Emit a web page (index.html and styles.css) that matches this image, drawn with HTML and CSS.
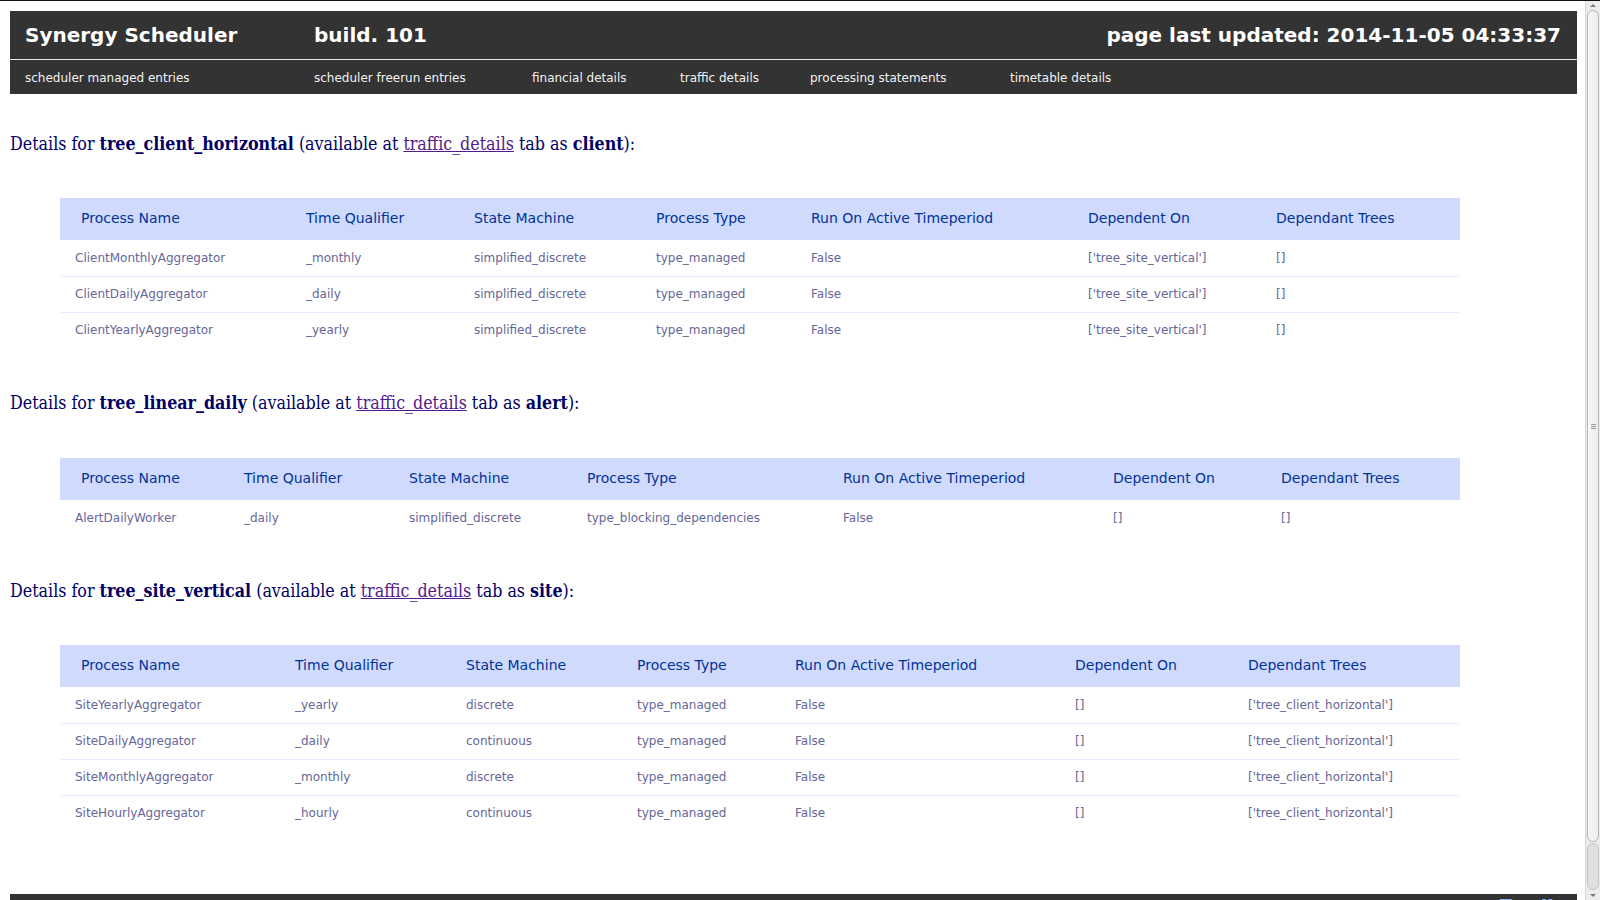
FILE: index.html
```html
<!DOCTYPE html>
<html>
<head>
<meta charset="utf-8">
<title>Synergy Scheduler</title>
<link rel="stylesheet" href="styles.css">
</head>
<body>
<div class="viewport">
  <div class="page">
    <div class="header">
      <div class="title-row">
        <div class="title">Synergy Scheduler</div>
        <div class="build">build. 101</div>
        <div class="updated">page last updated: 2014-11-05 04:33:37</div>
      </div>
      <div class="nav">
        <a class="nav-item">scheduler managed entries</a>
        <a class="nav-item">scheduler freerun entries</a>
        <a class="nav-item">financial details</a>
        <a class="nav-item">traffic details</a>
        <a class="nav-item">processing statements</a>
        <a class="nav-item">timetable details</a>
      </div>
    </div>

    <div class="section">
      <p class="heading">Details for <b>tree_client_horizontal</b> (available at <a class="link" href="#">traffic_details</a> tab as <b>client</b>):</p>
      <table class="details">
        <colgroup><col class="c231"><col class="c168"><col class="c181"><col class="c155"><col class="c277"><col class="c187"><col class="c199"></colgroup>
        <thead><tr><th>Process Name</th><th>Time Qualifier</th><th>State Machine</th><th>Process Type</th><th>Run On Active Timeperiod</th><th>Dependent On</th><th>Dependant Trees</th></tr></thead>
        <tbody>
          <tr><td>ClientMonthlyAggregator</td><td>_monthly</td><td>simplified_discrete</td><td>type_managed</td><td>False</td><td>['tree_site_vertical']</td><td>[]</td></tr>
          <tr><td>ClientDailyAggregator</td><td>_daily</td><td>simplified_discrete</td><td>type_managed</td><td>False</td><td>['tree_site_vertical']</td><td>[]</td></tr>
          <tr><td>ClientYearlyAggregator</td><td>_yearly</td><td>simplified_discrete</td><td>type_managed</td><td>False</td><td>['tree_site_vertical']</td><td>[]</td></tr>
        </tbody>
      </table>
    </div>

    <div class="section">
      <p class="heading">Details for <b>tree_linear_daily</b> (available at <a class="link" href="#">traffic_details</a> tab as <b>alert</b>):</p>
      <table class="details">
        <colgroup><col class="c169"><col class="c165"><col class="c178"><col class="c256"><col class="c270"><col class="c167"><col class="c194"></colgroup>
        <thead><tr><th>Process Name</th><th>Time Qualifier</th><th>State Machine</th><th>Process Type</th><th>Run On Active Timeperiod</th><th>Dependent On</th><th>Dependant Trees</th></tr></thead>
        <tbody>
          <tr><td>AlertDailyWorker</td><td>_daily</td><td>simplified_discrete</td><td>type_blocking_dependencies</td><td>False</td><td>[]</td><td>[]</td></tr>
        </tbody>
      </table>
    </div>

    <div class="section">
      <p class="heading">Details for <b>tree_site_vertical</b> (available at <a class="link" href="#">traffic_details</a> tab as <b>site</b>):</p>
      <table class="details">
        <colgroup><col class="c220"><col class="c171"><col class="c171"><col class="c158"><col class="c280"><col class="c172"><col class="c227"></colgroup>
        <thead><tr><th>Process Name</th><th>Time Qualifier</th><th>State Machine</th><th>Process Type</th><th>Run On Active Timeperiod</th><th>Dependent On</th><th>Dependant Trees</th></tr></thead>
        <tbody>
          <tr><td>SiteYearlyAggregator</td><td>_yearly</td><td>discrete</td><td>type_managed</td><td>False</td><td>[]</td><td>['tree_client_horizontal']</td></tr>
          <tr><td>SiteDailyAggregator</td><td>_daily</td><td>continuous</td><td>type_managed</td><td>False</td><td>[]</td><td>['tree_client_horizontal']</td></tr>
          <tr><td>SiteMonthlyAggregator</td><td>_monthly</td><td>discrete</td><td>type_managed</td><td>False</td><td>[]</td><td>['tree_client_horizontal']</td></tr>
          <tr><td>SiteHourlyAggregator</td><td>_hourly</td><td>continuous</td><td>type_managed</td><td>False</td><td>[]</td><td>['tree_client_horizontal']</td></tr>
        </tbody>
      </table>
    </div>

    <div class="footer"><span class="feedback">Feedback</span></div>
  </div>
  <div class="scrollbar">
    <div class="sb-arrow sb-up"></div>
    <div class="sb-thumb"><span class="sb-grip"></span></div>
    <div class="sb-track"></div>
    <div class="sb-arrow sb-down"></div>
  </div>
</div>
</body>
</html>
```

FILE: styles.css
```css
html, body {
  margin: 0;
  padding: 0;
  height: 900px;
  overflow: hidden;
  background: #fff;
}
body {
  border-top: 1px solid #111;
  box-sizing: border-box;
}
.viewport {
  display: flex;
  height: 899px;
}
.page {
  width: 1585px;
  box-sizing: border-box;
  padding: 10px 8px 0 10px;
  flex: none;
}
.header {
  background: #333333;
  font-family: "DejaVu Sans", sans-serif;
  color: #fff;
}
.title-row {
  display: grid;
  grid-template-columns: 289px 1fr auto;
  align-items: center;
  height: 48px;
  padding: 0 16px 0 15px;
  border-bottom: 1px solid #e8e8e8;
  font-weight: bold;
  font-size: 20px;
}
.nav {
  display: grid;
  grid-template-columns: 289px 218px 148px 130px 200px auto;
  align-items: center;
  height: 33px;
  padding: 1px 0 0 15px;
  font-size: 12px;
}
.nav-item {
  color: #f2f2f2;
  text-decoration: none;
}
.section {
  margin-top: 38.5px;
}
.section + .section {
  margin-top: 44px;
}
.heading {
  margin: 0 0 43.5px 0;
  font-family: "DejaVu Serif", serif;
  font-stretch: condensed;
  font-size: 17.7px;
  line-height: 22px;
  color: #000066;
}
.heading b {
  font-weight: bold;
}
.link {
  color: #551a8b;
}
.details {
  margin-left: 50px;
  width: 1400px;
  table-layout: fixed;
  border-collapse: collapse;
  font-family: "DejaVu Sans", sans-serif;
}
.details th {
  background: #d0dafd;
  color: #003399;
  font-weight: normal;
  font-size: 14px;
  text-align: left;
  height: 42px;
  padding: 0 0 2px 15px;
  box-sizing: border-box;
}
.details th:first-child {
  padding-left: 21px;
}
.details td {
  color: #666699;
  font-size: 12px;
  height: 36px;
  padding: 0 0 0 15px;
  box-sizing: border-box;
  white-space: nowrap;
}
.details tbody tr + tr td {
  border-top: 1px solid #e8edff;
}
.c231 { width: 231px; } .c168 { width: 168px; } .c181 { width: 182px; } .c155 { width: 155px; }
.c277 { width: 277px; } .c187 { width: 188px; } .c199 { width: 199px; }
.c169 { width: 169px; } .c165 { width: 165px; } .c178 { width: 178px; } .c256 { width: 256px; }
.c270 { width: 270px; } .c167 { width: 168px; } .c194 { width: 194px; }
.c220 { width: 220px; } .c171 { width: 171px; } .c158 { width: 158px; } .c280 { width: 280px; }
.c172 { width: 173px; } .c227 { width: 227px; }
.footer {
  margin-top: 63px;
  background: #333333;
  height: 40px;
  text-align: right;
  padding-top: 1px;
  overflow: hidden;
  white-space: nowrap;
}
.feedback {
  font-family: "DejaVu Serif", serif;
  font-size: 20px;
  color: #8fb3f0;
  margin-right: -19px;
}
.scrollbar {
  width: 15px;
  flex: none;
  display: flex;
  flex-direction: column;
  background: #ececec;
  border-left: 1px solid #d6d6d6;
  box-sizing: border-box;
}
.sb-arrow {
  height: 9px;
  flex: none;
  position: relative;
}
.sb-up::after, .sb-down::after {
  content: "";
  position: absolute;
  left: 4px;
  border-left: 3px solid transparent;
  border-right: 3px solid transparent;
}
.sb-up::after { top: 3px; border-bottom: 3px solid #777; }
.sb-down::after { top: 3px; border-top: 3px solid #777; }
.sb-thumb {
  height: 830px;
  flex: none;
  margin: 0 1px;
  background: linear-gradient(to right, #f6f6f6, #ededed);
  border: 1px solid #b8b8b8;
  border-radius: 6px;
  display: flex;
  align-items: center;
  justify-content: center;
}
.sb-grip {
  width: 5px;
  height: 5px;
  border-top: 1px solid #999;
  border-bottom: 1px solid #999;
  box-sizing: border-box;
  background: linear-gradient(#999, #999) center / 5px 1px no-repeat;
}
.sb-track {
  flex: 1;
  margin: 1px 1px;
  border: 1px solid #c4c4c4;
  border-radius: 6px;
  background: #e0e0e0;
}
```
